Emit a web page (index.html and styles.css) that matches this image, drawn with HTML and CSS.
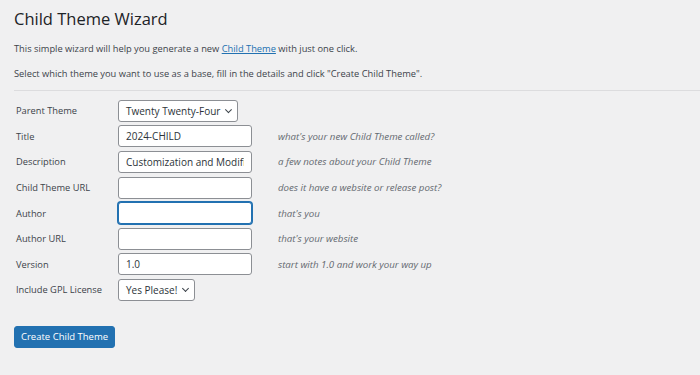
FILE: index.html
```html
<!DOCTYPE html>
<html>
<head>
  <title>Child Theme Wizard</title>
  <link rel="stylesheet" href="styles.css">
</head>
<body>
<div class="wrap">
  <h1>Child Theme Wizard</h1>
  <p>This simple wizard will help you generate a new <a href="#">Child Theme</a> with just one click.</p>
  <p>Select which theme you want to use as a base, fill in the details and click "Create Child Theme".</p>
</div>
<hr class="sep">
<div class="wrap">
  <table class="wizard">
    <tr>
      <td class="label">Parent Theme</td>
      <td><div class="select wide">Twenty Twenty-Four <span class="chev"></span></div></td>
      <td></td>
    </tr>
    <tr>
      <td class="label">Title</td>
      <td><input class="field" type="text" value="2024-CHILD" name="title" /></td>
      <td class="hint">what's your new Child Theme called?</td>
    </tr>
    <tr>
      <td class="label">Description</td>
      <td><input class="field" type="text" value="Customization and Modifications" name="desc" /></td>
      <td class="hint">a few notes about your Child Theme</td>
    </tr>
    <tr>
      <td class="label">Child Theme URL</td>
      <td><input class="field" type="text" value="" name="url" /></td>
      <td class="hint">does it have a website or release post?</td>
    </tr>
    <tr>
      <td class="label">Author</td>
      <td><input class="field focus" type="text" value="" name="author" /></td>
      <td class="hint">that's you</td>
    </tr>
    <tr>
      <td class="label">Author URL</td>
      <td><input class="field" type="text" value="" name="author_url" /></td>
      <td class="hint">that's your website</td>
    </tr>
    <tr>
      <td class="label">Version</td>
      <td><input class="field" type="text" value="1.0" name="version" /></td>
      <td class="hint">start with 1.0 and work your way up</td>
    </tr>
    <tr>
      <td class="label">Include GPL License</td>
      <td><div class="select">Yes Please! <span class="chev"></span></div></td>
      <td></td>
    </tr>
  </table>
  <button class="button">Create Child Theme</button>
</div>
</body>
</html>
```

FILE: styles.css
```css
body {
  margin: 0;
  background: #f0f0f1;
  color: #3c434a;
  font-family: "Open Sans", sans-serif;
  font-size: 9.3px;
}

.wrap {
  padding-left: 14px;
}

h1 {
  font-size: 16.5px;
  font-weight: 400;
  color: #1d2327;
  margin: 0;
  padding-top: 7px;
  line-height: 23px;
}

p {
  margin: 13px 0 0;
  line-height: 12px;
}

a {
  color: #2271b1;
}

.sep {
  border: 0;
  border-top: 1px solid #dcdcde;
  margin: 10px 0 0 14px;
}

.wizard {
  border-collapse: collapse;
  margin-top: 7px;
  font-size: 9.3px;
}

.wizard td {
  padding: 0;
  height: 25.6px;
  white-space: nowrap;
}

.label {
  width: 102px;
  padding-left: 2px !important;
}

.hint {
  font-style: italic;
  font-size: 9.7px;
  color: #646970;
  padding-left: 26px !important;
}

.field {
  box-sizing: border-box;
  width: 134px;
  height: 22px;
  border: 1px solid #8c8f94;
  border-radius: 3px;
  background: #fff;
  font-family: "Open Sans", sans-serif;
  font-size: 10px;
  color: #2c3338;
  padding: 0 7px;
  display: block;
}

.field.focus {
  border-color: #2271b1;
  box-shadow: 0 0 0 1px #2271b1;
  outline: none;
}

.select {
  box-sizing: border-box;
  display: inline-flex;
  align-items: center;
  height: 22px;
  border: 1px solid #8c8f94;
  border-radius: 3px;
  background: #fff;
  color: #2c3338;
  font-size: 10px;
  padding: 0 6px 0 7px;
  gap: 6px;
}

.select.wide {
  width: 120px;
}

.chev {
  width: 4px;
  height: 4px;
  border-right: 1.3px solid #3c434a;
  border-bottom: 1.3px solid #3c434a;
  transform: rotate(45deg);
  margin-top: -3px;
}

.button {
  display: block;
  margin-top: 23px;
  height: 22px;
  padding: 0 6px;
  background: #2271b1;
  border: 1px solid #2271b1;
  border-radius: 3px;
  color: #fff;
  font-family: "Open Sans", sans-serif;
  font-size: 9.5px;
}
```
